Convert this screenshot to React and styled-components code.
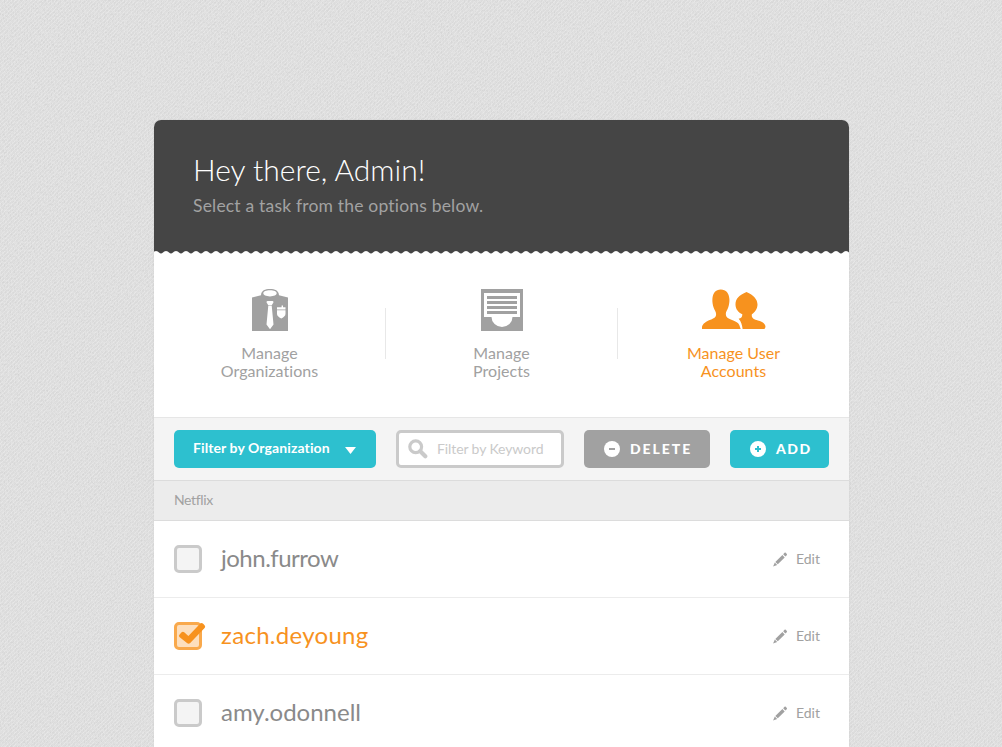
import React from "react";
import styled, { createGlobalStyle } from "styled-components";

const c = {
  dark: "#454545",
  teal: "#2dc0cf",
  orange: "#f7921e",
  grey: "#a1a1a1",
  line: "#cacaca",
};

const GlobalStyle = createGlobalStyle`
  *, *::before, *::after { box-sizing: border-box; }
  html, body { margin: 0; height: 100%; overflow: hidden; }
  body {
    font-family: Lato, "Open Sans", sans-serif;
    font-variant-ligatures: none;
    background: #e0e0e0;
  }
  h1, p, ul { margin: 0; padding: 0; }
  button { font: inherit; border: 0; cursor: pointer; }
`;

const Page = styled.main`
  position: relative;
  height: 100vh;
  padding-top: 120px;
  overflow: hidden;
`;

const Fabric = styled.svg`
  position: absolute;
  inset: 0;
  width: 100%;
  height: 100%;
`;

const Card = styled.section`
  position: relative;
  width: 695px;
  height: 700px;
  margin-left: 154px;
  background: #fff;
  border-radius: 7px 7px 0 0;
  box-shadow: 0 0 2px rgba(0, 0, 0, 0.08);
`;

const Header = styled.header`
  height: 131px;
  padding: 30px 39px 0;
  background: ${c.dark};
  border-radius: 7px 7px 0 0;
`;

const Title = styled.h1`
  font-size: 30px;
  line-height: 38px;
  font-weight: 300;
  color: #fff;
  white-space: nowrap;
`;

const Subtitle = styled.p`
  margin-top: 7px;
  font-size: 17.5px;
  line-height: 22px;
  letter-spacing: 0.19px;
  color: #a2a2a2;
  white-space: nowrap;
`;

const Scallop = styled.svg`
  display: block;
  width: 695px;
  height: 3px;
`;

const Nav = styled.nav`
  display: flex;
  align-items: flex-start;
  height: 163px;
`;

const NavDivider = styled.span`
  width: 1px;
  height: 51px;
  margin-top: 54px;
  background: #e8e8e8;
`;

const NavItem = styled.a`
  flex: 1;
  display: flex;
  flex-direction: column;
  align-items: center;
  padding-top: 33px;
  color: ${(p) => (p.$active ? c.orange : c.grey)};
  svg { display: block; height: 44px; fill: currentColor; }
`;

const NavLabel = styled.span`
  margin-top: 13px;
  font-size: 16px;
  line-height: 18px;
  text-align: center;
  letter-spacing: 0.04px;
  white-space: pre-line;
`;

const Toolbar = styled.div`
  display: flex;
  gap: 20px;
  height: 63px;
  padding: 12px 20px;
  background: #f4f4f4;
  border-top: 1px solid #e6e6e6;
`;

const Button = styled.button`
  display: flex;
  align-items: center;
  width: ${(p) => p.$w}px;
  height: 38px;
  padding: 0 0 0 ${(p) => p.$pad || 19}px;
  color: #fff;
  background: ${(p) => (p.$muted ? c.grey : c.teal)};
  border-radius: 5px;
`;

const FilterLabel = styled.span`
  padding-bottom: 2px;
  font-size: 14px;
  font-weight: 700;
  line-height: 18px;
  width: 152px;
  text-align: left;
  letter-spacing: 0.1px;
  white-space: nowrap;
`;

const Caret = styled.svg`
  width: 11px;
  height: 7px;
  margin-top: 3px;
  fill: #fff;
`;

const ActionLabel = styled.span`
  margin-left: 10px;
  padding-bottom: 1px;
  font-size: 14px;
  line-height: 17px;
  font-weight: 900;
  letter-spacing: ${(p) => p.$ls}px;
`;

const Search = styled.label`
  display: flex;
  align-items: center;
  width: 168px;
  height: 38px;
  padding-left: 9px;
  background: #fff;
  border: 3px solid ${c.line};
  border-radius: 5px;
`;

const SearchText = styled.span`
  margin-left: 9px;
  padding-bottom: 1px;
  font-size: 14px;
  line-height: 17px;
  color: ${c.line};
  letter-spacing: -0.1px;
  white-space: nowrap;
`;

const Group = styled.div`
  height: 41px;
  padding-left: 20px;
  font-size: 14px;
  line-height: 38px;
  letter-spacing: -0.35px;
  color: ${c.grey};
  background: #ececec;
  border-top: 1px solid #dcdcdc;
  border-bottom: 1px solid #dcdcdc;
`;

const Row = styled.li`
  display: flex;
  align-items: center;
  height: 77px;
  padding: 0 29px 0 20px;
  list-style: none;
  border-bottom: 1px solid #ececec;
`;

const Checkbox = styled.span`
  position: relative;
  width: 28px;
  height: 28px;
  background: ${(p) => (p.$on ? "#fddfbd" : "#f4f4f4")};
  border: 3px solid ${(p) => (p.$on ? "#f9a94c" : c.line)};
  border-radius: 5px;
  svg { position: absolute; left: 1px; top: -3px; }
`;

const Name = styled.span`
  flex: 1;
  margin-left: 19px;
  padding-bottom: 3px;
  font-size: 24px;
  line-height: 29px;
  letter-spacing: ${(p) => p.$ls}px;
  color: ${(p) => (p.$on ? c.orange : "#8a8a8a")};
`;

const Edit = styled.a`
  display: flex;
  align-items: center;
  gap: 8px;
  font-size: 14px;
  line-height: 17px;
  color: ${c.grey};
`;

const EditLabel = styled.span`
  padding-bottom: 1px;
`;

const ShirtIcon = () => (
  <svg width="36" height="44" viewBox="0 0 36 44">
    <path fillRule="evenodd" d="M0 10.500 9 8.200C9.300 3.500 13 2 18 2s8.700 1.500 9 6.200l9 2.300V44H0zM18 3.300c-4 0-6.700 1.300-6.700 3S14 9.400 18 9.400s6.700-1.400 6.700-3.100S22 3.300 18 3.300zM14.500 15.200q0-1.200 1.200-1.200h4.600q1.200 0 1.200 1.200l-1.600 2.900h-3.800zM16.300 18.600h3.400l1.800 19L18 42.200l-3.500-4.600zM25 20.200h4.600v-1.700h1.400v1.700h2.500v2.300H25zM25 23.300h8.500v3.400c0 2-1.500 3.400-4.200 4.800-2.800-1.400-4.300-2.800-4.300-4.800z" />
  </svg>
);

const TrayIcon = () => (
  <svg width="42" height="44" viewBox="0 0 42 44">
    <path d="M0 2h42v42H0z" />
    <path fill="#fff" d="M3 6h36v24h-7.500a10.500 10 0 0 1-21 0H3z" />
    <path d="M6 9h30v3H6zM6 14h30v3H6zM6 19h30v3H6zM6 24h30v3H6z" />
  </svg>
);

const UsersIcon = () => (
  <svg width="65" height="44" viewBox="0 0 65 44">
    <path d="M1 42v-2C1.500 36.500 5.500 34.200 9.500 32.700c4-1.500 5.700-2.700 5.600-5.700-.1-2.600-1.700-4-2.500-6.500-.9-2.800-1.400-5.500-1.200-8.500C11.800 6 14.500 2.400 19.800 2.400S28 6 28.400 12c.2 3-.3 5.700-1.200 8.500-.8 2.500-2.400 3.900-2.400 6.500 0 3 1.900 4.200 5 5.500 4.500 1.800 7.500 3 8.500 5.500l1.400 4z" />
    <path d="M41.600 42c-.5-4-1.600-8-4-10.300 2.500-.4 3.800-1.600 3.700-4.400-3.800-1.700-6.600-5-6.800-9.300C34.300 12 38 8 45.500 5c7.200 3 11 7.500 11 12.500 0 4.500-2.700 7.600-5.600 9.800-.8 3.700 2 5 6 6.100 4.800 1.300 7.600 3.200 7.600 6.600L63.500 42z" />
  </svg>
);

const SearchIcon = () => (
  <svg width="20" height="20" viewBox="0 0 20 20" fill="none" stroke={c.line}>
    <circle cx="7.700" cy="7.700" r="5.900" strokeWidth="3.200" />
    <path d="m12.300 12.300 5 5" strokeWidth="4.200" strokeLinecap="round" />
  </svg>
);

const SignIcon = ({ plus }) => (
  <svg width="16" height="16" viewBox="0 0 16 16">
    <circle cx="8" cy="8" r="8" fill="#fff" />
    <path
      d={plus ? "M5 8h6M8 5v6" : "M5 8h6"}
      stroke={plus ? c.teal : c.grey}
      strokeWidth="2"
    />
  </svg>
);

const PencilIcon = () => (
  <svg width="15" height="15" viewBox="0 0 15 15" fill={c.grey}>
    <path d="m10.200 2.300 1.300-1.500q.7-.6 1.300 0l1 1.100q.5.700 0 1.300l-1.500 1.400zM9.400 3l2.300 2.400-6.900 6.900-2.500-2.400zM1.800 10.600l2.400 2.400-4.100 1.400z" />
  </svg>
);

const CheckIcon = () => (
  <svg width="28" height="24" viewBox="0 0 28 24">
    <path fill={c.orange} d="M1.400 12.800 3.600 10.300q1.300-1.200 2.600 0L10.400 14 22.300 1.600q1.300-1.200 2.600 0l1.700 1.700q1.200 1.400 0 2.700L12.200 21q-1.600 1.600-3.200.1L1.400 14.900q-1-1 0-2.100z" />
  </svg>
);

const users = [
  { name: "john.furrow", ls: -0.5 },
  { name: "zach.deyoung", on: true, ls: 0.3 },
  { name: "amy.odonnell", ls: 0 },
];

export default function App() {
  return (
    <Page>
      <GlobalStyle />
      <Fabric aria-hidden="true">
        <defs>
          <filter id="weave" x="0" y="0" width="100%" height="100%">
            <feTurbulence type="fractalNoise" baseFrequency="0.7 0.5" numOctaves="2" seed="4" />
            <feColorMatrix values="0 0 0 0 0  0 0 0 0 0  0 0 0 0 0  .12 0 0 0 -.04" />
          </filter>
          <pattern id="twill" width="4" height="4" patternUnits="userSpaceOnUse">
            <path d="M-1 1l2-2M0 4l4-4M3 5l2-2" stroke="#fff" strokeOpacity=".22" />
          </pattern>
        </defs>
        <rect width="100%" height="100%" fill="#e2e2e2" />
        <rect width="100%" height="100%" filter="url(#weave)" />
        <rect width="100%" height="100%" fill="url(#twill)" />
      </Fabric>
      <Card>
        <Header>
          <Title>Hey there, Admin!</Title>
          <Subtitle>Select a task from the options below.</Subtitle>
        </Header>
        <Scallop>
          <defs>
            <pattern id="teeth" x="2" width="10" height="3" patternUnits="userSpaceOnUse">
              <path d="M0 0Q2 .4 3 1.400Q5 3.600 7 1.400Q8 .4 10 0z" fill={c.dark} />
            </pattern>
          </defs>
          <rect width="695" height="3" fill="url(#teeth)" />
        </Scallop>
        <Nav>
          <NavItem>
            <ShirtIcon />
            <NavLabel>{"Manage\nOrganizations"}</NavLabel>
          </NavItem>
          <NavDivider />
          <NavItem>
            <TrayIcon />
            <NavLabel>{"Manage\nProjects"}</NavLabel>
          </NavItem>
          <NavDivider />
          <NavItem $active>
            <UsersIcon />
            <NavLabel>{"Manage User\nAccounts"}</NavLabel>
          </NavItem>
        </Nav>
        <Toolbar>
          <Button $w={202}>
            <FilterLabel>Filter by Organization</FilterLabel>
            <Caret viewBox="0 0 11 7"><path d="M0 0h11L5.500 7z" /></Caret>
          </Button>
          <Search>
            <SearchIcon />
            <SearchText>Filter by Keyword</SearchText>
          </Search>
          <Button $w={126} $pad={20} $muted>
            <SignIcon />
            <ActionLabel $ls={1.95}>DELETE</ActionLabel>
          </Button>
          <Button $w={99} $pad={20}>
            <SignIcon plus />
            <ActionLabel $ls={1.5}>ADD</ActionLabel>
          </Button>
        </Toolbar>
        <Group>Netflix</Group>
        <ul>
          {users.map((u) => (
            <Row key={u.name}>
              <Checkbox $on={u.on}>{u.on && <CheckIcon />}</Checkbox>
              <Name $on={u.on} $ls={u.ls}>{u.name}</Name>
              <Edit><PencilIcon /><EditLabel>Edit</EditLabel></Edit>
            </Row>
          ))}
        </ul>
      </Card>
    </Page>
  );
}
